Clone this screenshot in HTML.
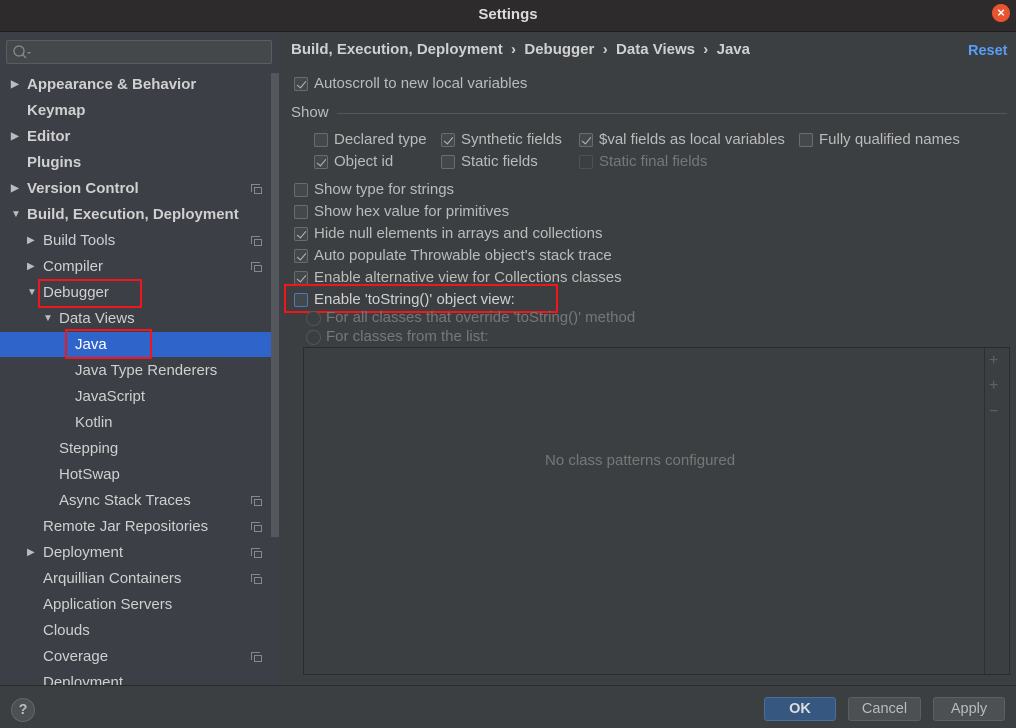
<!DOCTYPE html>
<html><head><meta charset="utf-8"><style>
*{box-sizing:border-box;margin:0;padding:0}
body{width:1016px;height:728px;overflow:hidden;background:#3c3f41;font-family:"Liberation Sans",sans-serif;font-size:14.5px;color:#bbbbbb;position:relative}
.a{position:absolute;white-space:nowrap}
.title{left:0;top:0;width:1016px;height:32px;background:#2d2b2b;border-bottom:1px solid #1e1e1e;color:#dcdcdc;font-weight:bold;text-align:center;line-height:29px;font-size:15px}
.close{left:992px;top:4px;width:18px;height:18px;border-radius:50%;background:#e9542f;color:#fff;font-size:13px;line-height:18px;text-align:center;font-weight:bold}
.left{left:0;top:32px;width:280px;height:653px;background:#3c3f46}
.search{left:6px;top:40px;width:266px;height:24px;border:1px solid #5a5d60;border-radius:2px;background:#45484a}
.sb{left:271px;top:73px;width:8px;height:464px;background:#54575c}
.t{height:26px;line-height:26px;color:#d0d0d0;font-size:15px}
.b{font-weight:bold}
.tri{position:absolute;font-size:10px;color:#bbb}
.cp{position:absolute;left:254px;width:8px;height:7px;border:1px solid #888}
.cp::before{content:"";position:absolute;left:-4px;top:-4px;width:8px;height:7px;border-left:1px solid #888;border-top:1px solid #888}
.sel{left:0;top:332px;width:271px;height:25px;background:#2f65ca}
.red{position:absolute;border:2px solid #f0161c}
.cb{position:absolute;width:14px;height:14px;border:1px solid #6b6b6b;border-radius:2px;background:#43494a}
.cb.c::after{content:"";position:absolute;left:3.5px;top:0.5px;width:4px;height:8px;border:solid #bbb;border-width:0 1.6px 1.6px 0;transform:rotate(40deg)}
.lb{position:absolute;line-height:22px;height:22px;font-size:15px}
.dim{color:#777}
.rd{position:absolute;width:15px;height:15px;border-radius:50%;border:1px solid #555;background:#3c3f41}
.bottom{left:0;top:685px;width:1016px;height:43px;background:#3c3f41;border-top:1px solid #2b2b2b}
.btn{position:absolute;top:697px;height:24px;border:1px solid #5e6060;border-radius:3px;background:#4c5052;color:#bbb;text-align:center;line-height:22px;font-size:14.5px}
</style></head><body>
<div class="a title">Settings</div>
<div class="a close">×</div>
<div class="a left"></div>
<div class="a search"><svg width="22" height="20" style="position:absolute;left:4px;top:2px"><circle cx="8" cy="8" r="5" stroke="#888" stroke-width="1.3" fill="none"/><line x1="11.5" y1="11.5" x2="15" y2="15" stroke="#888" stroke-width="1.3"/><path d="M16 9 L20 9 L18 11Z" fill="#888"/></svg></div>
<div class="a sb"></div>
<div class="a sel"></div>
<div class="a" style="left:0;top:72px;width:271px">
<div class="t b" style="padding-left:27px;position:relative">Appearance &amp; Behavior<span class="tri" style="left:11px">▶</span></div>
<div class="t b" style="padding-left:27px">Keymap</div>
<div class="t b" style="padding-left:27px;position:relative">Editor<span class="tri" style="left:11px">▶</span></div>
<div class="t b" style="padding-left:27px">Plugins</div>
<div class="t b" style="padding-left:27px;position:relative">Version Control<span class="tri" style="left:11px">▶</span><span class="cp" style="top:11px"></span></div>
<div class="t b" style="padding-left:27px;position:relative">Build, Execution, Deployment<span class="tri" style="left:11px">▼</span></div>
<div class="t" style="padding-left:43px;position:relative">Build Tools<span class="tri" style="left:27px">▶</span><span class="cp" style="top:11px"></span></div>
<div class="t" style="padding-left:43px;position:relative">Compiler<span class="tri" style="left:27px">▶</span><span class="cp" style="top:11px"></span></div>
<div class="t" style="padding-left:43px;position:relative">Debugger<span class="tri" style="left:27px">▼</span></div>
<div class="t" style="padding-left:59px;position:relative">Data Views<span class="tri" style="left:43px">▼</span></div>
<div class="t" style="padding-left:75px;color:#fff">Java</div>
<div class="t" style="padding-left:75px">Java Type Renderers</div>
<div class="t" style="padding-left:75px">JavaScript</div>
<div class="t" style="padding-left:75px">Kotlin</div>
<div class="t" style="padding-left:59px">Stepping</div>
<div class="t" style="padding-left:59px">HotSwap</div>
<div class="t" style="padding-left:59px;position:relative">Async Stack Traces<span class="cp" style="top:11px"></span></div>
<div class="t" style="padding-left:43px;position:relative">Remote Jar Repositories<span class="cp" style="top:11px"></span></div>
<div class="t" style="padding-left:43px;position:relative">Deployment<span class="tri" style="left:27px">▶</span><span class="cp" style="top:11px"></span></div>
<div class="t" style="padding-left:43px;position:relative">Arquillian Containers<span class="cp" style="top:11px"></span></div>
<div class="t" style="padding-left:43px">Application Servers</div>
<div class="t" style="padding-left:43px">Clouds</div>
<div class="t" style="padding-left:43px;position:relative">Coverage<span class="cp" style="top:11px"></span></div>
<div class="t" style="padding-left:43px">Deployment</div>
</div>
<div class="red" style="left:38px;top:279px;width:104px;height:29px"></div>
<div class="red" style="left:65px;top:329px;width:87px;height:30px"></div>

<div class="a b" style="left:291px;top:41px;color:#d0d0d0;font-size:15px">Build, Execution, Deployment &nbsp;›&nbsp; Debugger &nbsp;›&nbsp; Data Views &nbsp;›&nbsp; Java</div>
<div class="a b" style="left:968px;top:43px;color:#589df6">Reset</div>

<div class="cb c" style="left:294px;top:77px"></div><div class="lb" style="left:314px;top:73px">Autoscroll to new local variables</div>
<div class="lb" style="left:291px;top:102px">Show</div>
<div class="a" style="left:337px;top:113px;width:670px;height:1px;background:#555"></div>

<div class="cb" style="left:314px;top:133px"></div><div class="lb" style="left:334px;top:129px">Declared type</div>
<div class="cb c" style="left:441px;top:133px"></div><div class="lb" style="left:461px;top:129px">Synthetic fields</div>
<div class="cb c" style="left:579px;top:133px"></div><div class="lb" style="left:599px;top:129px">$val fields as local variables</div>
<div class="cb" style="left:799px;top:133px"></div><div class="lb" style="left:819px;top:129px">Fully qualified names</div>
<div class="cb c" style="left:314px;top:155px"></div><div class="lb" style="left:334px;top:151px">Object id</div>
<div class="cb" style="left:441px;top:155px"></div><div class="lb" style="left:461px;top:151px">Static fields</div>
<div class="cb" style="left:579px;top:155px;border-color:#505050;background:#3c3f41"></div><div class="lb dim" style="left:599px;top:151px">Static final fields</div>

<div class="cb" style="left:294px;top:183px"></div><div class="lb" style="left:314px;top:179px">Show type for strings</div>
<div class="cb" style="left:294px;top:205px"></div><div class="lb" style="left:314px;top:201px">Show hex value for primitives</div>
<div class="cb c" style="left:294px;top:227px"></div><div class="lb" style="left:314px;top:223px">Hide null elements in arrays and collections</div>
<div class="cb c" style="left:294px;top:249px"></div><div class="lb" style="left:314px;top:245px">Auto populate Throwable object's stack trace</div>
<div class="cb c" style="left:294px;top:271px"></div><div class="lb" style="left:314px;top:267px">Enable alternative view for Collections classes</div>
<div class="cb" style="left:294px;top:293px;border-color:#4a7ab8"></div><div class="lb" style="left:314px;top:289px;color:#d0d0d0">Enable 'toString()' object view:</div>
<div class="red" style="left:284px;top:284px;width:274px;height:29px"></div>
<div class="rd" style="left:306px;top:311px"></div><div class="lb dim" style="left:326px;top:307px">For all classes that override 'toString()' method</div>
<div class="rd" style="left:306px;top:330px"></div><div class="lb dim" style="left:326px;top:326px">For classes from the list:</div>

<div class="a" style="left:303px;top:347px;width:707px;height:328px;border:1px solid #2b2b2b;background:#3c3f41"></div>
<div class="a" style="left:984px;top:348px;width:1px;height:326px;background:#2e2e2e"></div>
<div class="a" style="left:989px;top:352px;color:#5f6163;font-size:16px">+</div>
<div class="a" style="left:989px;top:377px;color:#5f6163;font-size:16px">+</div>
<div class="a" style="left:989px;top:403px;color:#5f6163;font-size:16px">−</div>
<div class="a dim" style="left:545px;top:452px;font-size:15px">No class patterns configured</div>

<div class="a bottom"></div>
<div class="a" style="left:11px;top:698px;width:24px;height:24px;border-radius:50%;border:1px solid #666;background:#4c5052;text-align:center;line-height:22px;font-weight:bold;color:#bbb">?</div>
<div class="btn" style="left:764px;width:72px;background:#365880;border-color:#4a6f9a;font-weight:bold;color:#ddd">OK</div>
<div class="btn" style="left:848px;width:73px">Cancel</div>
<div class="btn" style="left:933px;width:72px">Apply</div>
</body></html>
